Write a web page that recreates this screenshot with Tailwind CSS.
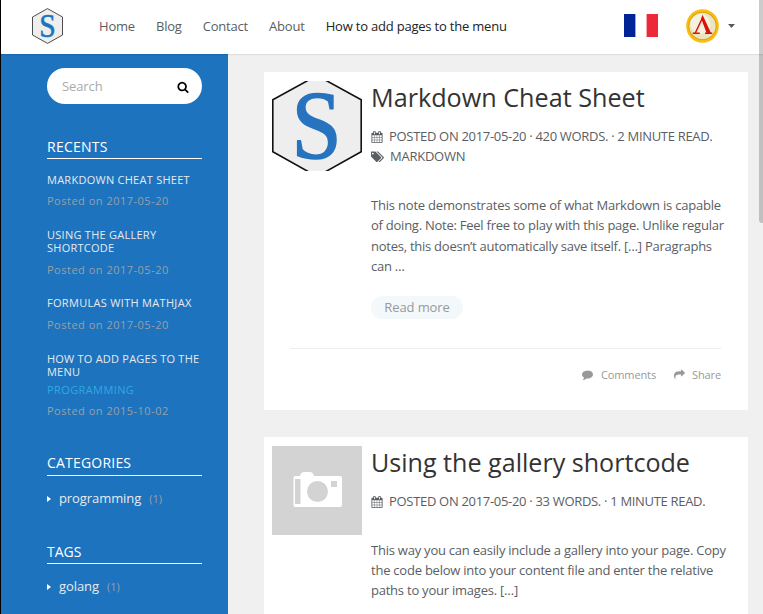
<!DOCTYPE html>
<html lang="en">
<head>
<meta charset="utf-8">
<title>Blog</title>
<script src="https://cdn.jsdelivr.net/npm/@tailwindcss/browser@4"></script>
</head>
<body class="relative h-[614px] w-[763px] overflow-hidden bg-[#f0f0f0] font-['Open_Sans',sans-serif] text-[13px] text-[#5a5e63]">
<svg class="hidden">
  <symbol id="calendar" viewBox="0 0 1792 1792"><path d="M192 1664h288v-288h-288v288zm352 0h320v-288h-320v288zm-352-352h288v-320h-288v320zm352 0h320v-320h-320v320zm-352-384h288v-288h-288v288zm736 736h320v-288h-320v288zm-384-736h320v-288h-320v288zm768 736h288v-288h-288v288zm-384-352h320v-320h-320v320zm-352-864v-288q0-13-9.500-22.500t-22.500-9.500h-64q-13 0-22.500 9.500t-9.500 22.500v288q0 13 9.500 22.500t22.500 9.500h64q13 0 22.500-9.500t9.500-22.500zm736 864h288v-320h-288v320zm-384-384h320v-288h-320v288zm384 0h288v-288h-288v288zm32-480v-288q0-13-9.500-22.500t-22.500-9.500h-64q-13 0-22.500 9.500t-9.500 22.500v288q0 13 9.500 22.500t22.500 9.500h64q13 0 22.500-9.500t9.500-22.500zm384-64v1280q0 52-38 90t-90 38h-1408q-52 0-90-38t-38-90v-1280q0-52 38-90t90-38h128v-96q0-66 47-113t113-47h64q66 0 113 47t47 113v96h384v-96q0-66 47-113t113-47h64q66 0 113 47t47 113v96h128q52 0 90 38t38 90z"/></symbol>
</svg>
<div class="flex h-full flex-col border-l border-black">
  <header class="z-10 flex h-[54px] shrink-0 items-center bg-white pl-[31px] pr-[28px] shadow-[0_1px_1px_rgba(0,0,0,0.07)]">
    <svg class="mb-[2px] h-[36px] w-[31px] shrink-0" viewBox="0 0 31 36"><path d="M15.500.6 30.500 9v18L15.500 35.400.5 27V9Z" fill="#eee" stroke="#222" stroke-width=".8"/><text transform="translate(15.500 29) scale(.9 1)" text-anchor="middle" font-family="Liberation Serif, serif" font-size="33" fill="#1e73be" stroke="#1e73be" stroke-width=".6">S</text></svg>
    <nav class="mb-[2px] ml-[36px] flex h-[20px] items-center gap-[21px] whitespace-nowrap leading-[20px] tracking-[-0.2px]">
      <a>Home</a><a>Blog</a><a>Contact</a><a>About</a><a class="text-[#222]">How to add pages to the menu</a>
    </nav>
    <div class="ml-auto flex items-center">
      <svg class="mb-[4px] h-[23px] w-[34px]" viewBox="0 0 34 23"><path fill="#fff" d="M0 0h34v23H0z"/><path fill="#002395" d="M0 0h11.400v23H0z"/><path fill="#ed2939" d="M22.600 0H34v23H22.600z"/></svg>
      <svg class="mb-[2px] ml-[28px] h-[34px] w-[33px]" viewBox="0 0 33 34"><ellipse cx="16.500" cy="17" rx="16.300" ry="16.800" fill="#fbbc0b"/><circle cx="16.500" cy="17" r="14" fill="#d69a12"/><circle cx="16.500" cy="17" r="13.200" fill="#ebe4c0"/><circle cx="14.500" cy="15" r="10" fill="#f5f1dc"/><path d="M6.800 24.200h7M19 24.200h7.200M9.300 24 16.200 9.500" fill="none" stroke="#d8130a" stroke-width="1.500"/><path d="M16.500 5.800 25.200 24.500h-4.400L15.100 9.500Z" fill="#d8130a"/></svg>
      <svg class="mb-[2px] ml-[9px] h-[4px] w-[7px]" viewBox="0 0 7 4"><path d="M0 0h7L3.500 4Z" fill="#555a60"/></svg>
    </div>
  </header>
  <div class="flex min-h-0 flex-1">
    <aside class="flex w-[227px] shrink-0 flex-col bg-[#1e73be] pl-[46px] pr-[26px] pt-[14px] text-[#e6eaee]">
      <div class="flex h-[36px] shrink-0 items-center justify-between rounded-full bg-white pl-[15px] pr-[13px] text-[#aaa]"><span class="mt-px tracking-[-0.1px]">Search</span>
        <svg class="mt-[2px] h-[12px] w-[12px] fill-black" viewBox="0 0 1792 1792"><path d="M1216 832q0-185-131.500-316.500t-316.500-131.500-316.500 131.500-131.500 316.500 131.500 316.500 316.500 131.500 316.500-131.500 131.500-316.500zm512 832q0 52-38 90t-90 38q-54 0-90-38l-343-342q-179 124-399 124-143 0-273.500-55.500t-225-150-150-225-55.500-273.500 55.500-273.500 150-225 225-150 273.500-55.500 273.500 55.500 225 150 150 225 55.500 273.500q0 220-124 399l343 343q37 37 37 90z"/></svg>
      </div>
      <section class="mt-[33px] text-[11px] tracking-[0.26px]">
        <h2 class="h-[22px] border-b border-white text-[14px] leading-[20px] text-white">RECENTS</h2>
        <div class="mt-[14px] h-[55px]"><p class="leading-[13px]">MARKDOWN CHEAT SHEET</p><p class="mt-[6px] leading-[18px] tracking-[0.5px] text-[#999fa7]">Posted on 2017-05-20</p></div>
        <div class="h-[68px]"><p class="leading-[13px]">USING THE GALLERY<br>SHORTCODE</p><p class="mt-[7px] leading-[18px] tracking-[0.5px] text-[#999fa7]">Posted on 2017-05-20</p></div>
        <div class="h-[56px]"><p class="leading-[13px] tracking-[0.31px]">FORMULAS WITH MATHJAX</p><p class="mt-[7px] leading-[18px] tracking-[0.5px] text-[#999fa7]">Posted on 2017-05-20</p></div>
        <div class="h-[101px]"><p class="whitespace-nowrap leading-[13px] tracking-[0.22px]">HOW TO ADD PAGES TO THE<br>MENU</p><p class="mt-[4px] leading-[16px] tracking-[0.4px] text-[#2fa8e0]">PROGRAMMING</p><p class="mt-[4px] leading-[18px] tracking-[0.5px] text-[#999fa7]">Posted on 2015-10-02</p></div>
      </section>
      <section>
        <h2 class="h-[23px] border-b border-white text-[14px] leading-[20px] tracking-[0.2px] text-white">CATEGORIES</h2>
        <div class="mt-[13px] flex h-[20px] items-center"><svg class="h-[6px] w-[4px] fill-white" viewBox="0 0 4 6"><path d="M0 0 4 3 0 6Z"/></svg><span class="ml-[8px] tracking-[-0.08px]">programming</span><span class="ml-[8px] text-[11px] text-[#999fa7]">(1)</span></div>
      </section>
      <section class="mt-[33px]">
        <h2 class="h-[22px] border-b border-white text-[14px] leading-[20px] text-white">TAGS</h2>
        <div class="mt-[13px] flex h-[20px] items-center"><svg class="h-[6px] w-[4px] fill-white" viewBox="0 0 4 6"><path d="M0 0 4 3 0 6Z"/></svg><span class="ml-[8px] tracking-[-0.08px]">golang</span><span class="ml-[8px] text-[11px] text-[#999fa7]">(1)</span></div>
      </section>
    </aside>
    <main class="flex w-[520px] shrink-0 flex-col gap-[27px] overflow-hidden pl-[36px] pt-[18px]">
      <article class="h-[338px] shrink-0 bg-white pt-[9px]">
        <div class="flex gap-[9px] pl-[8px]">
          <svg class="h-[90px] w-[90px] shrink-0" viewBox="0 0 90 90"><path d="M45-5.500 89.200 18.700v52L45 95.500.8 70.700v-52Z" fill="#eee" stroke="#111" stroke-width="1.600"/><text transform="translate(44.700 77.300) scale(.93 1)" text-anchor="middle" font-family="Liberation Serif, serif" font-size="97" fill="#2773c0" stroke="#2773c0" stroke-width="1.500" stroke-linejoin="round">S</text></svg>
          <div class="whitespace-nowrap">
            <h1 class="h-[34px] text-[25.2px] leading-[33px] text-[#333]">Markdown Cheat Sheet</h1>
            <p class="mt-[12px] flex h-[20px] items-center gap-[6px]"><svg class="h-[12px] w-[12px] fill-current"><use href="#calendar"/></svg><span class="tracking-[-0.31px]">POSTED ON 2017-05-20 · 420 WORDS. · 2 MINUTE READ.</span></p>
            <p class="flex h-[20px] items-center gap-[6px]"><svg class="h-[12px] w-[13px] fill-current" viewBox="0 100 1856 1660"><path d="M384 448q0-53-37.500-90.500t-90.500-37.500-90.500 37.500-37.500 90.500 37.500 90.500 90.500 37.500 90.500-37.500 37.500-90.500zm1067 576q0 53-37 90l-491 492q-39 37-91 37-53 0-90-37l-715-716q-38-37-64.500-101t-26.500-117v-416q0-52 38-90t90-38h416q53 0 117 26.500t102 64.500l715 714q37 39 37 91zm384 0q0 53-37 90l-491 492q-39 37-91 37-36 0-59-14t-53-45l470-470q37-37 37-90 0-52-37-91l-715-714q-38-38-102-64.500t-117-26.500h224q53 0 117 26.500t102 64.500l715 714q37 39 37 91z"/></svg><span class="tracking-[-0.25px]">MARKDOWN</span></p>
            <p class="mt-[28px] leading-[20.400px] tracking-[-0.25px]"><span class="tracking-[-0.2px]">This note demonstrates some of what Markdown is capable</span><br>of doing. Note: Feel free to play with this page. Unlike regular<br>notes, this doesn’t automatically save itself. […] Paragraphs<br>can …</p>
            <a class="mt-[19px] flex h-[23px] w-[92px] items-center justify-center rounded-full bg-[#f3f8fa] pt-px tracking-[-0.1px] text-[#999]">Read more</a>
          </div>
        </div>
        <footer class="ml-[26px] mr-[27px] mt-[29px] flex items-center justify-end border-t border-[#ededed] pt-[16px] text-[11px] leading-[20px] tracking-[-0.12px] text-[#999]">
          <svg class="h-[11px] w-[11px] fill-current" viewBox="0 0 1792 1792"><path d="M1792 896q0 174-120 321.500t-326 233-450 85.500q-70 0-145-8-198 175-460 242-49 14-114 22-17 2-30.500-9t-17.500-29v-1q-3-4-.5-12t2-10 4.500-9.500l6-9 7-8.500 8-9q7-8 31-34.500t34.500-38 31-39.500 32.500-51 27-59 26-76q-157-89-247.500-220t-90.500-281q0-130 71-248.500t191-204.500 286-136.500 348-50.500q244 0 450 85.500t326 233 120 321.500z"/></svg><span class="ml-[8px]">Comments</span>
          <svg class="ml-[18px] h-[11px] w-[11px] fill-current" viewBox="0 0 1792 1792"><path d="M1792 640q0 26-19 45l-512 512q-19 19-45 19t-45-19-19-45v-256h-224q-98 0-175.500 6t-154 21.500-133 42.500-105.500 69.500-80 101-48.500 138.500-17.500 181q0 55 5 123 0 6 2.500 23.500t2.500 26.500q0 15-8.500 25t-23.500 10q-16 0-28-17-7-9-13-22t-13.500-30-10.500-24q-127-285-127-451 0-199 53-333 162-403 875-403h224v-256q0-26 19-45t45-19 45 19l512 512q19 19 19 45z"/></svg><span class="ml-[7px]">Share</span>
        </footer>
      </article>
      <article class="h-[177px] shrink-0 bg-white pt-[9px]">
        <div class="flex gap-[9px] pl-[8px]">
          <svg class="h-[89px] w-[90px] shrink-0" viewBox="0 0 90 89"><path fill="#d3d3d3" d="M0 0h90v89H0z"/><path fill="#fff" d="M23 30h5q1-4 4-4h6q3 0 4 4h26q2 0 2 2v27q0 2-2 2H23q-1.500 0-1.500-2V32q0-2 1.500-2Z"/><path fill="#d3d3d3" d="M23 33h5.500v25H23zM59 35h6v6h-6z"/><circle cx="45.500" cy="45.500" r="10.500" fill="#d3d3d3"/></svg>
          <div class="whitespace-nowrap">
            <h1 class="h-[34px] text-[25.1px] leading-[33px] text-[#333]">Using the gallery shortcode</h1>
            <p class="mt-[12px] flex h-[20px] items-center gap-[6px]"><svg class="h-[12px] w-[12px] fill-current"><use href="#calendar"/></svg><span class="tracking-[-0.31px]">POSTED ON 2017-05-20 · 33 WORDS. · 1 MINUTE READ.</span></p>
            <p class="mt-[28px] leading-[20.200px] tracking-[-0.23px]">This way you can easily include a gallery into your page. Copy<br>the code below into your content file and enter the relative<br>paths to your images. […]</p>
          </div>
        </div>
      </article>
    </main>
  </div>
</div>
<div class="absolute -top-1 left-[759px] z-20 h-[227px] w-[8px] rounded-[3px] bg-black/20"></div>
</body>
</html>
